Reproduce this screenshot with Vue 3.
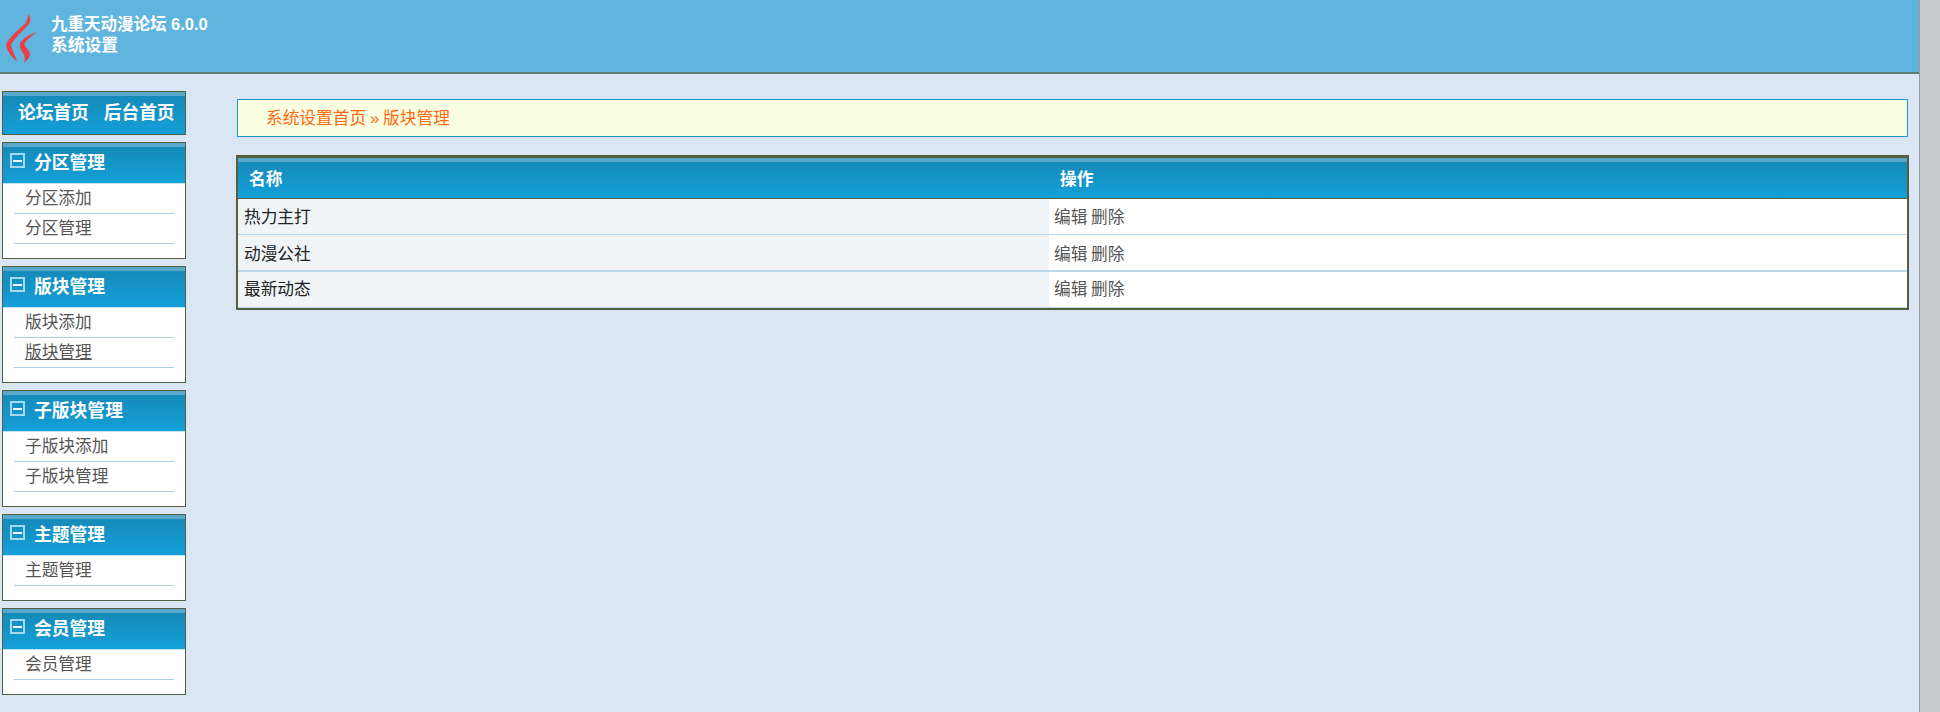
<script setup>
const groups = [
  { title: '分区管理', items: ['分区添加', '分区管理'] },
  { title: '版块管理', items: ['版块添加', '版块管理'] },
  { title: '子版块管理', items: ['子版块添加', '子版块管理'] },
  { title: '主题管理', items: ['主题管理'] },
  { title: '会员管理', items: ['会员管理'] },
]
const rows = ['热力主打', '动漫公社', '最新动态']
const active = 1
</script>

<template>
  <div class="page">
    <div class="main">
      <header class="top">
        <svg class="logo" width="50" height="72" viewBox="0 0 50 72">
          <path d="M28 14 C31 17 31 21 29 24 C24 30 15 37 11 45 C12 50 15 55 17 61 C12 58 7 51 6 45 C9 37 18 30 25 24 C27 21 28 18 28 14Z" fill="#ee3f45"/>
          <path d="M37 32 C32 36 27 39 24 44 C26 48 30 51 30 55 C29 59 26 61 24 63 C25 59 25 56 23 53 C21 50 19 47 20 43 C24 37 31 34 37 32Z" fill="#ee3f45"/>
        </svg>
        <div class="brand">
          <div>九重天动漫论坛 6.0.0</div>
          <div class="sub">系统设置</div>
        </div>
      </header>
      <div class="body">
        <aside class="side">
          <div class="box home">
            <div class="home-bar"><span>论坛首页</span><span>后台首页</span></div>
          </div>
          <div v-for="(g, gi) in groups" :key="g.title" class="box">
            <div class="box-head">
              <span class="minus"><i></i></span>
              <span>{{ g.title }}</span>
            </div>
            <ul class="list">
              <li v-for="(it, i) in g.items" :key="it" :class="{ hover: gi === active && i === 1 }">{{ it }}</li>
            </ul>
          </div>
        </aside>
        <section class="content">
          <div class="crumb">系统设置首页 <span class="raquo">»</span> 版块管理</div>
          <table class="tbl">
            <thead>
              <tr>
                <th class="c1">名称</th>
                <th>操作</th>
              </tr>
            </thead>
            <tbody>
              <tr v-for="r in rows" :key="r">
                <td class="name">{{ r }}</td>
                <td class="ops">编辑 删除</td>
              </tr>
            </tbody>
          </table>
        </section>
      </div>
    </div>
    <div class="scrollbar"></div>
  </div>
</template>

<style>
html, body { margin: 0; overflow: hidden; }
</style>

<style scoped>
.page {
  display: flex;
  width: 1940px;
  height: 712px;
  overflow: hidden;
  font-family: "Noto Sans CJK SC", "Liberation Sans", sans-serif;
  font-size: 16.7px;
  background: #dae6f3;
}
.main { width: 1919px; flex: none; }
.scrollbar {
  flex: 1;
  background: #c9cacd;
  border-left: 1px solid #9b9da0;
}
.top {
  height: 72px;
  background: #5fb5de;
  border-bottom: 2px solid #5b7d75;
  display: flex;
  align-items: flex-start;
}
.logo { flex: none; }
.brand {
  margin: 14px 0 0 1px;
  color: #fff;
  font-weight: 700;
  font-size: 16.5px;
  line-height: 21px;
  font-family: "Liberation Sans", "Noto Sans CJK SC", sans-serif;
}
.sub { font-size: 16.8px; }
.body { display: flex; }
.side {
  width: 188px;
  flex: none;
  padding: 17px 0 0 2px;
  box-sizing: border-box;
}
.box {
  width: 184px;
  box-sizing: border-box;
  border: 1px solid #555f3f;
  background: #fff;
  margin-bottom: 7px;
}
.box.home { margin-bottom: 7px; height: 44px; }
.home-bar {
  height: 42px;
  box-sizing: border-box;
  border-top: 4px solid #57a8cb;
  background: linear-gradient(#158ab9, #14a0d9);
  color: #fff;
  font-weight: 700;
  display: flex;
  gap: 15px;
  padding-left: 15px;
  font-size: 17.7px;
  line-height: 30px;
}
.box-head {
  height: 41px;
  box-sizing: border-box;
  border-top: 4px solid #57a8cb;
  border-bottom: 1px solid #c8e4f3;
  background: linear-gradient(#158ab9, #14a0d9);
  color: #fff;
  font-weight: 700;
  font-size: 17.8px;
  line-height: 29px;
  display: flex;
  padding-left: 7px;
  gap: 9px;
}
.minus {
  width: 15px;
  height: 15px;
  box-sizing: border-box;
  border: 2px solid #a8d8ee;
  margin-top: 6px;
  display: flex;
  align-items: center;
  justify-content: center;
}
.minus i { display: block; width: 9px; height: 2px; background: #eef8fc; }
.list {
  list-style: none;
  margin: 0;
  padding: 0 11px 14px;
}
.list li {
  height: 30px;
  box-sizing: border-box;
  border-bottom: 1px solid #a9cbe4;
  padding-left: 11px;
  line-height: 27px;
  color: #555;
}
.list li.hover {
  text-decoration: underline;
  text-underline-offset: 1px;
}
.content { flex: 1; padding: 25px 10px 0 48px; min-width: 0; }
.crumb {
  height: 38px;
  box-sizing: border-box;
  margin: 0 1px 0 1px;
  border: 1px solid #1a9bcf;
  background: #fbffe2;
  color: #ff6a13;
  padding-left: 28px;
  line-height: 35px;
}
.raquo { font-family: "Liberation Sans", sans-serif; font-size: 17px; line-height: 1; }
.tbl {
  width: 100%;
  margin-top: 18px;
  border-collapse: separate;
  border-spacing: 0;
  border: 1px solid #555f3f;
  border-width: 3px 2px 2px;
  table-layout: fixed;
}
.tbl th {
  height: 41px;
  padding: 0 0 4px 11px;
  box-sizing: border-box;
  text-align: left;
  color: #fff;
  font-size: 16.7px;
  border-top: 4px solid #57a8cb;
  border-bottom: 1px solid #555f3f;
  background: linear-gradient(#158ab9, #14a0d9);
}
.tbl .c1 { width: 811px; }
.tbl td {
  height: 36px;
  padding: 0 0 2px 6px;
  box-sizing: border-box;
  border-bottom: 1px solid #b9d9ef;
  background: #fff;
}
.tbl tr:nth-child(2) td { height: 37px; border-bottom-width: 2px; padding-bottom: 0; }
.tbl tr:nth-child(3) td { padding-bottom: 4px; }
.tbl .name { background: #f0f4f7; color: #222; }
.tbl .ops { color: #555; padding-left: 5px; }
</style>
